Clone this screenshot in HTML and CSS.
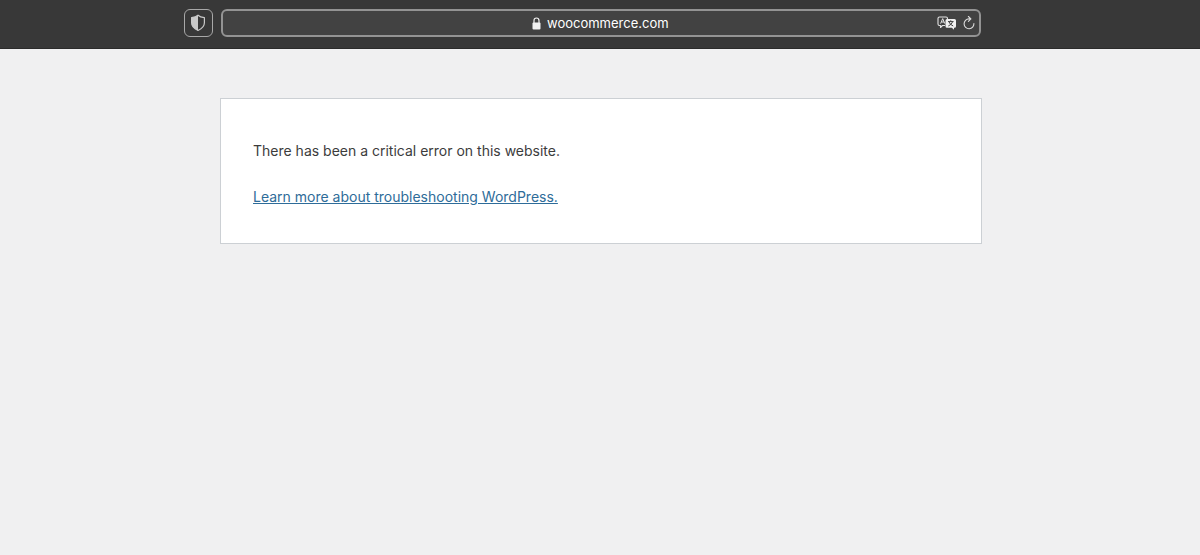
FILE: index.html
```html
<!DOCTYPE html>
<html lang="en">
<head>
<meta charset="utf-8">
<meta name="viewport" content="width=device-width, initial-scale=1">
<title>woocommerce.com</title>
<link rel="stylesheet" href="styles.css">
</head>
<body class="page">
<header class="toolbar">
  <button class="shield-button" type="button" aria-label="Privacy report">
    <svg width="16" height="18" viewBox="0 0 16 18" aria-hidden="true">
      <path d="M8 1.200C6.500 2.500 4 3.300 1.600 3.600v5.200c0 3.600 2.600 6 6.400 7.700 3.800-1.700 6.400-4.100 6.400-7.700V3.600C12 3.300 9.500 2.500 8 1.200z" fill="none" stroke="#c9c9c9" stroke-width="1.200" stroke-linejoin="round"/>
      <path d="M8 1.200C6.500 2.500 4 3.300 1.600 3.600v5.200c0 3.600 2.600 6 6.400 7.700z" fill="#c9c9c9"/>
    </svg>
  </button>
  <div class="address-bar">
    <label class="address">
      <svg width="9" height="13" viewBox="0 0 9 13" aria-hidden="true">
        <path d="M2 6V3.700C2 2 3 1 4.500 1S7 2 7 3.700V6" fill="none" stroke="#f2f2f2" stroke-width="1.200"/>
        <rect x="0.500" y="5.500" width="8" height="7" rx="1" fill="#f2f2f2"/>
      </svg>
      <input class="address-input" type="text" value="woocommerce.com" aria-label="Address" spellcheck="false">
    </label>
    <div class="actions">
      <button class="icon-button" type="button" aria-label="Translate">
        <svg width="20" height="14" viewBox="0 0 20 14" aria-hidden="true">
          <path d="M8 9.500H5.500L3.500 11.500V9.500H2.500Q1 9.500 1 8V2.500Q1 1 2.500 1H9Q10.500 1 10.500 2.500V3" fill="none" stroke="#e4e4e4" stroke-width="1.100" stroke-linejoin="round"/>
          <path d="M3.600 7.600L5.700 2.600L7.800 7.600M4.400 6H7" fill="none" stroke="#e4e4e4" stroke-width="1"/>
          <path d="M10 3h7.500Q19 3 19 4.500v5.700q0 1.500-1.500 1.500H17v2l-2.200-2H10q-1.500 0-1.500-1.500V4.500Q8.500 3 10 3z" fill="#f0f0f0"/>
          <path d="M11 5.600h5.500M13.750 4.300v1.300M15.700 5.600Q14.700 8.700 11.300 10M11.900 5.600Q12.900 8.700 16.200 10" fill="none" stroke="#404040" stroke-width="1"/>
        </svg>
      </button>
      <button class="icon-button" type="button" aria-label="Reload">
        <svg width="12" height="14" viewBox="0 0 12 14" aria-hidden="true">
          <path d="M10.900 7.500A4.900 4.900 0 1 1 6 2.900H7.700M5.400 0.500L7.900 2.900L5.400 5.300" fill="none" stroke="#dcdcdc" stroke-width="1.100" stroke-linecap="round" stroke-linejoin="round"/>
        </svg>
      </button>
    </div>
  </div>
</header>
<main class="content">
  <section class="error-card">
    <p class="message">There has been a critical error on this website.</p>
    <p class="message"><a class="help-link" href="#">Learn more about troubleshooting WordPress.</a></p>
  </section>
</main>
</body>
</html>
```
FILE: styles.css
```css
* {
  box-sizing: border-box;
}

.page {
  margin: 0;
  background: #f0f0f1;
  color: #3c3c3c;
  font-family: Inter, "Liberation Sans", sans-serif;
  font-size: 14px;
}

.toolbar {
  display: grid;
  grid-template-columns: minmax(45px, 1fr) minmax(0, 760px) minmax(8px, 1fr);
  padding: 9px 0 11px 1px;
  background: #383838;
  border-bottom: 1px solid #2b2b2b;
}

.shield-button {
  display: flex;
  align-items: center;
  justify-content: center;
  justify-self: end;
  width: 29px;
  height: 28px;
  margin-right: 8px;
  padding: 0;
  background: #383838;
  border: 1px solid #a8a8a8;
  border-radius: 6px;
}

.address-bar {
  display: grid;
  grid-template-columns: 1fr auto 1fr;
  align-items: center;
  height: 28px;
  padding: 0 4px;
  background: #424242;
  border: 2px solid #939393;
  border-radius: 6px;
}

.address {
  display: flex;
  grid-column: 2;
  align-items: center;
  gap: 6px;
}

.address-input {
  width: 122px;
  padding: 0;
  background: transparent;
  border: 0;
  outline: 0;
  color: #fff;
  font: 400 13px/20px Inter, "Liberation Sans", sans-serif;
}

.actions {
  display: flex;
  align-items: center;
  justify-content: end;
  gap: 6px;
}

.icon-button {
  display: flex;
  padding: 0;
  background: none;
  border: 0;
}

.content {
  padding: 49px 15px 49px 17px;
}

.error-card {
  display: grid;
  gap: 24px;
  max-width: 762px;
  margin: 0 auto;
  padding: 41px 32px 35px;
  background: #fff;
  border: 1px solid #ccd0d4;
}

.message {
  margin: 0;
  line-height: 22px;
}

.help-link {
  color: #2e6c99;
  text-underline-offset: 1px;
}
```
